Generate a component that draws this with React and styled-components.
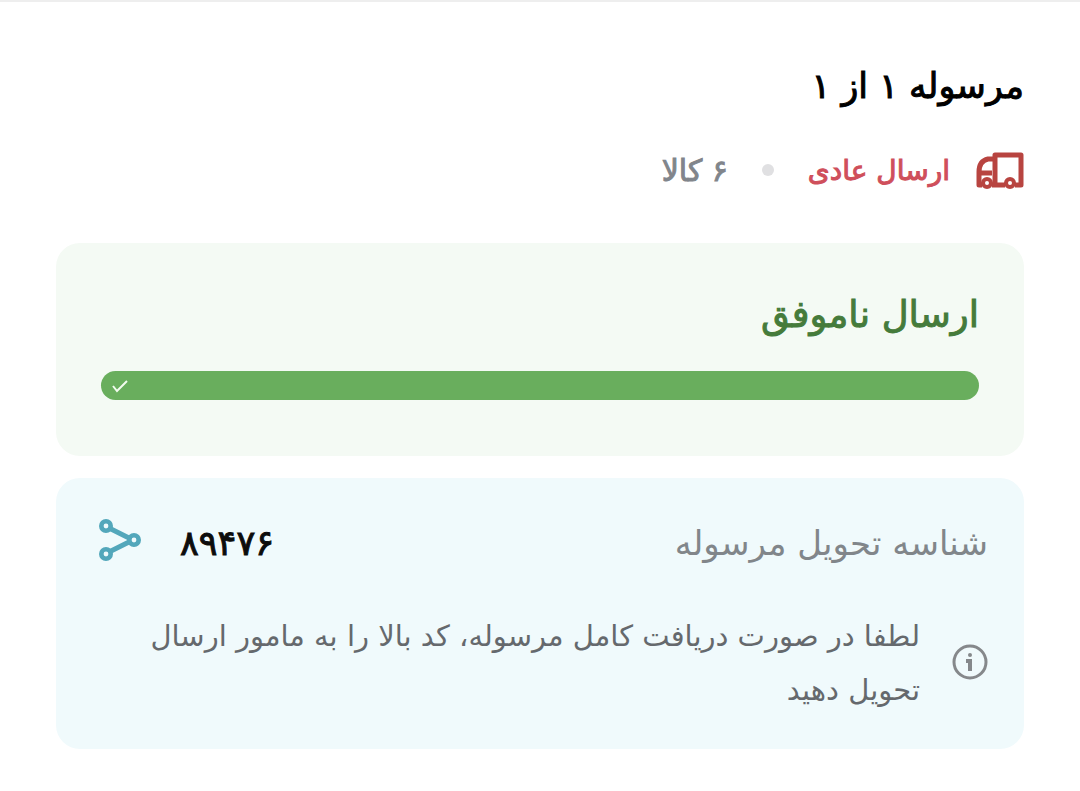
import React from "react";
import styled, { createGlobalStyle } from "styled-components";

const GlobalStyle = createGlobalStyle`
  * { box-sizing: border-box; }
  body {
    margin: 0;
    background: #fff;
    font-family: "DejaVu Sans", sans-serif;
  }
`;

const Page = styled.main`
  direction: rtl;
  border-top: 2px solid #eeeeee;
  padding: 56px 56px 40px;
`;

const Heading = styled.h1`
  margin: 0;
  color: #000;
  font-size: 35px;
  line-height: 56px;
  font-weight: 400;
  -webkit-text-stroke: 1px currentColor;
`;

const Summary = styled.div`
  display: flex;
  align-items: center;
  margin-top: 32px;
  height: 50px;
`;

const TruckIcon = styled.svg`
  width: 48px;
  height: 38px;
  flex: none;
`;

const Method = styled.span`
  margin-right: 26px;
  color: #cf4f5b;
  font-size: 28px;
  line-height: 48px;
  -webkit-text-stroke: 1px currentColor;
`;

const Dot = styled.span`
  width: 12px;
  height: 12px;
  margin: 0 34px 2px;
  border-radius: 50%;
  background: #e0e0e2;
`;

const Count = styled.span`
  color: #81858b;
  font-size: 30px;
  line-height: 48px;
  -webkit-text-stroke: 1px currentColor;
`;

const Card = styled.section`
  border-radius: 24px;
  background: ${(p) => p.$tint};
`;

const StatusCard = styled(Card)`
  margin-top: 47px;
  padding: 44px 45px 56px 45px;
`;

const StatusTitle = styled.h2`
  margin: 0;
  color: #457b3b;
  font-size: 37px;
  line-height: 56px;
  font-weight: 400;
  -webkit-text-stroke: 1px currentColor;
`;

const Progress = styled.div`
  display: flex;
  align-items: center;
  justify-content: flex-end;
  height: 29px;
  margin-top: 28px;
  padding: 0 11px;
  border-radius: 15px;
  background: #69ae5d;
`;

const CheckIcon = styled.svg`
  width: 16px;
  height: 14px;
`;

const DeliveryCard = styled(Card)`
  margin-top: 22px;
  padding: 37px 36px 32px 42px;
`;

const CodeRow = styled.div`
  display: flex;
  align-items: center;
`;

const CodeLabel = styled.span`
  flex: 1;
  color: #81868a;
  font-size: 34px;
  line-height: 56px;
`;

const Code = styled.strong`
  color: #0c0c0c;
  font-size: 35px;
  line-height: 56px;
  font-weight: 400;
  -webkit-text-stroke: 1px currentColor;
`;

const ShareButton = styled.button`
  display: flex;
  margin: 0 38px 6px 0;
  padding: 0;
  border: 0;
  background: none;
  cursor: pointer;
`;

const Note = styled.div`
  display: flex;
  align-items: center;
  margin-top: 38px;
`;

const NoteText = styled.p`
  flex: 1;
  margin: 0 32px;
  color: #65696d;
  font-size: 29px;
  line-height: 54px;
`;

const InfoIcon = styled.svg`
  width: 36px;
  height: 36px;
  margin-bottom: 2px;
  flex: none;
`;

export default function App() {
  return (
    <>
      <GlobalStyle />
      <Page lang="fa">
        <Heading>مرسوله ۱ از ۱</Heading>
        <Summary>
          <TruckIcon viewBox="0 0 48 38" fill="none" stroke="#b84440" strokeWidth="5" aria-hidden="true">
            <path d="M16 33H29M39 33H45V3H19V32M19 7H12Q3 9 3 20V33H6M3 21H16" strokeLinejoin="round" />
            <circle cx="11" cy="31" r="4" strokeWidth="4" />
            <circle cx="34" cy="31" r="4" strokeWidth="4" />
          </TruckIcon>
          <Method>ارسال عادی</Method>
          <Dot />
          <Count>۶ کالا</Count>
        </Summary>

        <StatusCard $tint="#f4faf4">
          <StatusTitle>ارسال ناموفق</StatusTitle>
          <Progress role="progressbar" aria-label="ارسال" aria-valuenow={100}>
            <CheckIcon viewBox="0 0 16 14" fill="none" stroke="#f2fbef" strokeWidth="2" aria-hidden="true">
              <path d="M1 7L5 12L15 2" />
            </CheckIcon>
          </Progress>
        </StatusCard>

        <DeliveryCard $tint="#f0fafc">
          <CodeRow>
            <CodeLabel>شناسه تحویل مرسوله</CodeLabel>
            <Code>۸۹۴۷۶</Code>
            <ShareButton type="button" aria-label="اشتراک‌گذاری">
              <svg width="44" height="44" viewBox="0 0 44 44" fill="none" stroke="#53a7bb" strokeWidth="5" aria-hidden="true">
                <path d="M12 10.5L31 20M12 33.5L31 24" />
                <circle cx="8" cy="8" r="4.7" strokeWidth="4.6" />
                <circle cx="36" cy="22" r="4.7" strokeWidth="4.6" />
                <circle cx="8" cy="36" r="4.7" strokeWidth="4.6" />
              </svg>
            </ShareButton>
          </CodeRow>
          <Note>
            <InfoIcon viewBox="0 0 36 36" fill="none" stroke="#85888b" strokeWidth="4" aria-hidden="true">
              <circle cx="18" cy="18" r="16" strokeWidth="3" />
              <circle cx="18" cy="11" r="2" fill="#85888b" stroke="none" />
              <path d="M14 17H18V27" />
            </InfoIcon>
            <NoteText>
              لطفا در صورت دریافت کامل مرسوله، کد بالا را به مامور ارسال تحویل دهید
            </NoteText>
          </Note>
        </DeliveryCard>
      </Page>
    </>
  );
}
